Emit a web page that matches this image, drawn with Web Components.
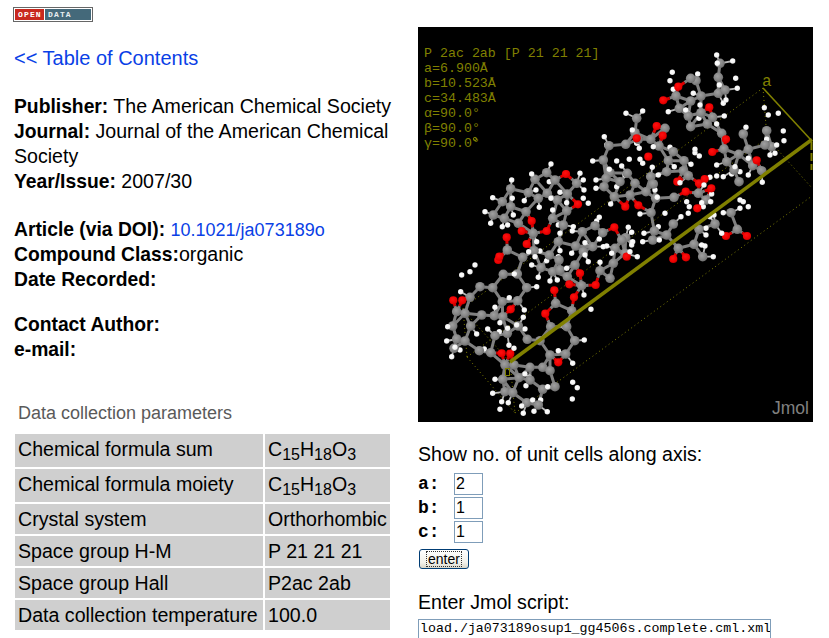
<!DOCTYPE html>
<html lang="en">
<head>
<meta charset="utf-8">
<title>Crystal data</title>
<style>
html,body{margin:0;padding:0;height:100%;overflow:hidden;background:#fff}
body{font-family:"Liberation Sans",Arial,sans-serif;color:#000}
</style>
</head>
<body>
<crystal-page>
  <open-data-badge slot="left"></open-data-badge>
  <blue-link slot="left" size="20" style="margin-top:24px;display:block;line-height:25px">&lt;&lt; Table of Contents</blue-link>
  <info-block slot="left" gap="23">
    <info-line label="Publisher:"> The American Chemical Society</info-line>
    <info-line label="Journal:"> Journal of the American Chemical<br>Society</info-line>
    <info-line label="Year/Issue:"> 2007/30</info-line>
  </info-block>
  <info-block slot="left" gap="23">
    <info-line label="Article (via DOI):"> <blue-link size="18">10.1021/ja073189o</blue-link></info-line>
    <info-line label="Compound Class:">organic</info-line>
    <info-line label="Date Recorded:"></info-line>
  </info-block>
  <info-block slot="left" gap="20">
    <info-line label="Contact Author:"></info-line>
    <info-line label="e-mail:"></info-line>
  </info-block>
  <data-table slot="left" caption="Data collection parameters">
    <data-cell>Chemical formula sum</data-cell><data-cell>C<sub-num>15</sub-num>H<sub-num>18</sub-num>O<sub-num>3</sub-num></data-cell>
    <data-cell>Chemical formula moiety</data-cell><data-cell>C<sub-num>15</sub-num>H<sub-num>18</sub-num>O<sub-num>3</sub-num></data-cell>
    <data-cell>Crystal system</data-cell><data-cell>Orthorhombic</data-cell>
    <data-cell>Space group H-M</data-cell><data-cell>P 21 21 21</data-cell>
    <data-cell>Space group Hall</data-cell><data-cell>P2ac 2ab</data-cell>
    <data-cell>Data collection temperature</data-cell><data-cell>100.0</data-cell>
  </data-table>
  <jmol-viewer slot="right"></jmol-viewer>
  <cell-controls slot="right"></cell-controls>
</crystal-page>

<script>
function shadow(el, html){ const r = el.attachShadow({mode:'open'}); r.innerHTML = html; return r; }

customElements.define('crystal-page', class extends HTMLElement{
  constructor(){ super(); shadow(this, `<style>
    :host{display:flex;width:829px;height:638px;overflow:hidden;box-sizing:border-box}
    .l{width:418px;padding-left:14px;box-sizing:border-box;flex:none}
    .r{width:395px;padding-top:27px;flex:none}
  </style><div class="l"><slot name="left"></slot></div><div class="r"><slot name="right"></slot></div>`); }
});

customElements.define('open-data-badge', class extends HTMLElement{
  constructor(){ super(); shadow(this, `<style>
    :host{display:block;width:80px;height:15px;margin:7px 0 0 -1px;box-sizing:border-box;border:1px solid #666;background:#fff;padding:1px}
    .w{display:flex;gap:1px;height:11px;font:bold 8px/11px "Liberation Mono",monospace;letter-spacing:1.15px;color:#fff}
    .o{width:29px;background:#c8281e;padding-left:3px;box-sizing:border-box}
    .d{flex:1;background:#44697a;padding-left:3px;box-sizing:border-box;color:#e8eef0}
  </style><div class="w"><span class="o">OPEN</span><span class="d">DATA</span></div>`); }
});

customElements.define('blue-link', class extends HTMLElement{
  constructor(){ super(); const s = this.getAttribute('size')||18; shadow(this, `<style>
    :host{display:inline;font-size:${s}px;line-height:0;color:#0a3fe6;font-family:"Liberation Sans",Arial,sans-serif}
  </style><slot></slot>`); }
});

customElements.define('info-block', class extends HTMLElement{
  constructor(){ super(); const g = this.getAttribute('gap')||0; shadow(this, `<style>
    :host{display:block;margin-top:${g}px}
  </style><slot></slot>`); }
});

customElements.define('info-line', class extends HTMLElement{
  constructor(){ super(); const l = this.getAttribute('label')||''; shadow(this, `<style>
    :host{display:block;font:19.6px/25px "Liberation Sans",Arial,sans-serif;min-height:25px;width:395px}
    b{font-weight:bold;font-size:19.3px;line-height:0}
  </style><b>${l}</b><slot></slot>`); }
});

customElements.define('data-table', class extends HTMLElement{
  constructor(){ super(); const c = this.getAttribute('caption')||''; shadow(this, `<style>
    :host{display:block;margin-top:41px}
    .c{font:18px/20px "Liberation Sans",Arial,sans-serif;color:#5a5a5a;padding-left:4px;height:31px}
    .g{display:grid;grid-template-columns:248px 125px;grid-template-rows:33px 33px 30px 30px 30px 30px;gap:2px;margin-left:1px;margin-top:0}
  </style><div class="c">${c}</div><div class="g"><slot></slot></div>`); }
});

customElements.define('data-cell', class extends HTMLElement{
  constructor(){ super(); shadow(this, `<style>
    :host{display:flex;align-items:flex-start;background:#cfcfcf;padding:3px 0 0 3px;box-sizing:border-box;font:19.6px/24px "Liberation Sans",Arial,sans-serif;white-space:nowrap;overflow:hidden}
    span{display:block}
  </style><span><slot></slot></span>`); }
});

customElements.define('sub-num', class extends HTMLElement{
  constructor(){ super(); shadow(this, `<style>
    :host{display:inline;font-size:16px;vertical-align:-4px;line-height:0}
  </style><slot></slot>`); }
});

customElements.define('cell-controls', class extends HTMLElement{
  constructor(){ super(); shadow(this, `<style>
    :host{display:block;font:19.6px/24px "Liberation Sans",Arial,sans-serif}
    .h{margin-top:20px;height:31px;line-height:24px}
    .rows{display:flex;flex-direction:column;gap:2px}
    .row{display:flex;align-items:center;height:22px}
    .lab{width:36px;font:bold 18px/22px "Liberation Mono",monospace}
    input{box-sizing:border-box;height:22px;border:1px solid #7f9db9;padding:0 1px;margin:0;outline:0;background:#fff;color:#000;font:16px "Liberation Sans",Arial,sans-serif}
    .n{width:29px}
    button{display:block;margin:6px 0 0 1px;width:50px;height:20px;box-sizing:border-box;border:1px solid #003c74;border-radius:3px;background:linear-gradient(#fff,#f2f1ea 70%,#d9d6c8);padding:0;font:14px/14px "Liberation Sans",Arial,sans-serif;color:#000;position:relative}
    button span{display:block;margin:1px 6px;height:16px;border:1px dotted #333;line-height:14px;box-sizing:border-box}
    .h2{margin-top:21px;height:29px;line-height:24px}
    .s{display:block;width:353px;height:24px;font:13.3px "Liberation Mono",monospace;padding:0 0 5px 1px;margin-top:0}
  </style>
  <div class="h">Show no. of unit cells along axis:</div>
  <div class="rows">
    <div class="row"><span class="lab">a:</span><input class="n" value="2"></div>
    <div class="row"><span class="lab">b:</span><input class="n" value="1"></div>
    <div class="row"><span class="lab">c:</span><input class="n" value="1"></div>
  </div>
  <button><span>enter</span></button>
  <div class="h2">Enter Jmol script:</div>
  <input class="s" value="load./ja073189osup1_gg4506s.complete.cml.xml">`); }
});

/* atoms are read off the picture: [originX, originY, grey, white, red], coordinates at 3x */
const CLUSTERS = [
 [420,220,
  [262,90,308,112,250,163,292,162,320,203,293,242,247,245,218,203,180,200,150,232,110,275,135,280,98,318,110,357,135,363,152,318,185,285,223,287,248,290,225,347,262,340,295,318,322,358,178,392,212,398,255,435,282,435,248,478,255,515,278,518,297,473,330,442,368,442,390,405,390,452,330,480,368,508,405,500,320,548,355,555,392,320,360,362,440,320,455,272,407,250,464,362,437,402,102,385,342,92,363,143,398,155,417,120,388,105,415,65,467,78,487,35,525,17,548,38,490,95,465,135,442,170,420,150,540,152,580,130,570,175,485,197,340,40,295,10,430,15],
  [212,10,247,20,263,15,457,33,350,65,326,95,360,93,420,92,455,100,495,68,530,3,335,135,355,172,390,183,412,180,440,145,380,122,505,125,540,127,550,80,560,78,575,100,165,135,125,165,150,155,283,162,350,200,122,215,225,262,268,233,292,240,313,270,170,342,203,327,310,292,240,308,238,335,263,325,315,327,290,315,193,387,83,320,80,363,105,382,120,390,95,410,267,376,282,385,433,320,415,392,438,402,458,430,493,360,513,268,492,225,225,478,240,568,218,520,245,545,265,548,328,472,383,500,318,497,315,462,362,540,338,540,342,574,382,575,310,580,305,558,458,487,472,503,457,537,410,392],
  [260,52,320,72,305,33,380,33,335,3,235,120,583,22,480,160,448,193,527,195,462,232,403,211,376,281,272,268,127,241,100,241,245,400,271,401,415,427]],
 [620,60,
  [300,10,295,52,228,62,212,55,243,108,295,100,315,90,168,108,212,123,178,145,243,158,278,172,205,168,262,192,212,200,135,205,50,175,45,218,92,238,55,238,17,253,117,258,160,275,192,302,145,302,190,332,140,335,92,350,205,347,22,340,100,372,45,370,78,395,30,405,235,400,162,412,107,415,258,420,93,458,160,492,140,525,98,540,103,513,175,565,222,553,237,508,285,492,333,458,352,508,370,222,440,212,455,260,385,268,356,283,312,267,320,305,398,317,425,332,357,365,342,330,435,255,305,220,17,533,5,540,248,590],
  [157,37,233,42,347,55,150,62,220,100,160,88,352,85,310,130,240,135,145,155,197,150,237,175,313,168,203,160,290,192,303,215,18,160,68,153,37,210,150,262,225,268,225,278,238,288,163,320,213,313,50,250,58,265,60,298,100,260,28,298,68,310,97,322,5,318,15,345,180,368,115,345,155,318,433,143,445,165,475,160,378,202,490,213,440,238,470,255,492,242,450,285,465,280,385,295,290,315,345,320,335,342,310,350,385,345,427,367,360,335,252,375,270,352,290,348,275,402,245,428,105,390,112,412,135,460,60,462,200,425,208,440,205,460,183,470,250,440,272,425,360,420,370,425,385,440,360,445,310,458,305,520,282,465,270,470,258,505,258,525,115,500,72,520,68,545,118,540,245,555,255,558,280,590,35,517,38,545,30,575,52,590],
  [130,121,268,142,175,80,110,198,128,227,50,235,85,290,318,238,277,276,410,301,237,370,172,365,197,395,254,357,274,385,232,445,16,440,55,436,318,528,381,528,20,590,198,592,160,597]],
 [470,130,
  [417,47,467,43,400,90,420,128,470,128,408,145,402,170,450,155,433,200,480,195,195,148,230,128,255,150,320,160,292,192,232,190,175,188,122,176,97,215,122,230,70,255,103,265,150,280,168,245,205,205,262,210,248,265,290,243,277,285,340,305,375,288,400,308,368,350,318,348,268,335,190,312,115,358,160,380,435,355,465,325,465,370],
  [403,20,410,45,440,93,368,93,418,118,495,5,460,100,480,88,378,150,378,175,440,170,422,222,243,102,185,132,238,155,125,150,330,130,340,150,342,180,355,220,340,205,198,180,270,187,243,205,290,218,248,240,68,203,163,212,127,205,208,232,45,245,60,283,95,295,112,283,130,255,310,290,270,310,265,285,388,262,388,327,415,348,345,335,475,292,430,370,485,345,215,362,195,380,208,368,265,380,345,375],
  [288,132,324,223,155,305,183,270,233,305,170,342,108,322,430,292,467,232,505,225,470,380,88,380]],
 [640,30,
  [240,97,240,145,160,152,180,200,150,212,235,190,255,180],
  [230,75,232,100,278,93,285,145,288,175,238,165,250,215,258,210,172,130,97,127,95,152,100,180],
  []]
];

customElements.define('jmol-viewer', class extends HTMLElement{
  constructor(){
    super();
    const collect = k => {
      const out = [];
      for(const c of CLUSTERS){
        const a = c[k];
        for(let i=0;i<a.length;i+=2){
          const x = c[0]+a[i]/3, y = c[1]+a[i+1]/3;
          if(!out.some(p=>Math.hypot(p[0]-x,p[1]-y)<3.2)) out.push([x,y]);
        }
      }
      return out;
    };
    const grey = collect(2), white = collect(3), red = collect(4);
    const f = n => n.toFixed(1);
    const near = (p,list,max,n) => list.map(q=>[q,Math.hypot(p[0]-q[0],p[1]-q[1])]).filter(e=>e[1]>0.1&&e[1]<max).sort((a,b)=>a[1]-b[1]).slice(0,n).map(e=>e[0]);
    let bonds = '', hb = '', rb = '';
    for(let i=0;i<grey.length;i++){
      for(const q of near(grey[i],grey,19,3)){
        bonds += `M${f(grey[i][0])} ${f(grey[i][1])}L${f(q[0])} ${f(q[1])}`;
      }
    }
    for(const p of white){ for(const q of near(p,grey,13,1)) hb += `M${f(p[0])} ${f(p[1])}L${f(q[0])} ${f(q[1])}`; }
    for(const p of red){
      for(const q of near(p,grey,15,2)){
        const mx=(p[0]+q[0])/2,my=(p[1]+q[1])/2;
        rb += `M${f(p[0])} ${f(p[1])}L${f(mx)} ${f(my)}`;
        bonds += `M${f(mx)} ${f(my)}L${f(q[0])} ${f(q[1])}`;
      }
    }
    const circles = (list,r,fill) => list.map(p=>`<circle cx="${f(p[0])}" cy="${f(p[1])}" r="${r}" fill="url(#${fill})"/>`).join('');
    const dotted = [[763,88,463,308],[463,308,467,357],[467,357,767,138],[463,310,510,362],[467,357,515,413],[515,413,812,196],[763,88,767,138],[767,138,812,188],[510,362,515,413]]
      .map(l=>`<line x1="${l[0]}" y1="${l[1]}" x2="${l[2]}" y2="${l[3]}"/>`).join('');
    const wA = white.filter((p,i)=>i%2===0), wB = white.filter((p,i)=>i%2===1);
    shadow(this, `<style>
      :host{display:block;position:relative;width:395px;height:395px;background:#000;overflow:hidden}
      svg{display:block;width:395px;height:395px}
      .info{position:absolute;left:6px;top:19px;font:13.3px/15.05px "Liberation Mono",monospace;color:#808000;white-space:pre}
      .logo{position:absolute;right:4px;bottom:5px;font:17.5px/18px "Liberation Sans",Arial,sans-serif;color:#808080}
      .ax{position:absolute;left:344px;top:46px;font:16px/18px "Liberation Mono",monospace;color:#808000}
    </style>
    <svg viewBox="418 27 395 395" xmlns="http://www.w3.org/2000/svg">
      <defs>
        <radialGradient id="g" cx=".42" cy=".38" r=".7"><stop offset="0" stop-color="#a0a0a0"/><stop offset=".55" stop-color="#868686"/><stop offset="1" stop-color="#666"/></radialGradient>
        <radialGradient id="w" cx=".42" cy=".38" r=".7"><stop offset="0" stop-color="#fff"/><stop offset=".7" stop-color="#f2f2f2"/><stop offset="1" stop-color="#c0c0c0"/></radialGradient>
        <radialGradient id="r" cx=".42" cy=".38" r=".7"><stop offset="0" stop-color="#ff1010"/><stop offset=".7" stop-color="#ea0000"/><stop offset="1" stop-color="#b00000"/></radialGradient>
      </defs>
      <g fill="none" stroke="#808000" stroke-width="1" stroke-dasharray="1 3">${dotted}</g>
      <path d="${hb}" stroke="#b8b8b8" stroke-width="1.8" fill="none"/>
      <path d="${bonds}" stroke="#808080" stroke-width="3" fill="none"/>
      <path d="${rb}" stroke="#d80000" stroke-width="3" fill="none"/>
      ${circles(wA,2.7,'w')}${circles(grey,4.8,'g')}${circles(red,4.1,'r')}${circles(wB,2.7,'w')}
      <line x1="510" y1="362" x2="812" y2="139.500" stroke="#808000" stroke-width="3.600"/>
      <line x1="763" y1="88" x2="811" y2="140" stroke="#808000" stroke-width="1.6"/>
      <path d="M811.500 142v8M811.500 153v8M811.500 164v6" stroke="#808000" stroke-width="2"/>
      <rect x="505.500" y="368.500" width="4" height="7" fill="none" stroke="#808000"/>
      <circle cx="475" cy="139" r="1.700" fill="none" stroke="#808000"/>
    </svg>
    <div class="info">P 2ac 2ab [P 21 21 21]
a=6.900Å
b=10.523Å
c=34.483Å
α=90.0°
β=90.0°
γ=90.0°</div>
    <div class="ax">a</div>
    <div class="logo">Jmol</div>`);
  }
});
</script>
</body>
</html>
